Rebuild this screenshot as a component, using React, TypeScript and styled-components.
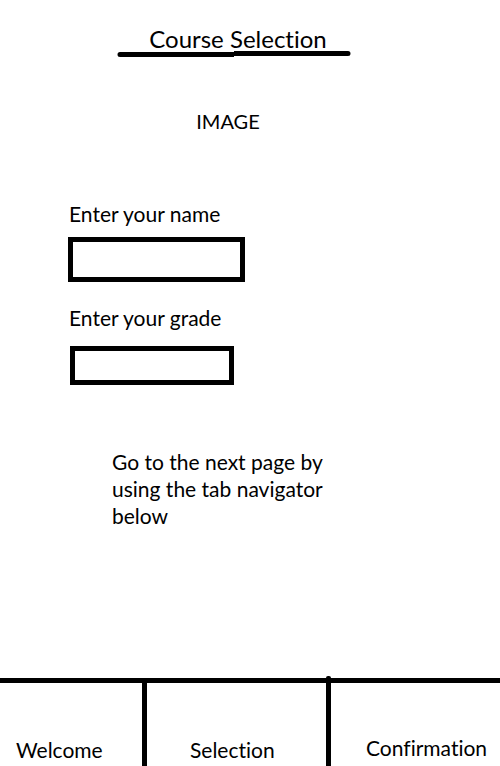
import React from "react";
import styled, { createGlobalStyle } from "styled-components";

const GlobalStyle = createGlobalStyle`
  *, *::before, *::after { box-sizing: border-box; }
  body {
    margin: 0;
    background: #fff;
    color: #000;
    font-family: Lato, "Open Sans", sans-serif;
    font-size: 21px;
    line-height: 27px;
    font-variant-ligatures: none;
  }
`;

const Page = styled.div`
  display: flex;
  flex-direction: column;
  min-height: 100vh;
`;

const Header = styled.header`
  display: flex;
  flex-direction: column;
  align-items: center;
  padding: 23px 24px 0 0;
`;

const Title = styled.h1`
  margin: 0;
  font-size: 24px;
  line-height: 32px;
  font-weight: 400;
`;

const Underline = styled.svg`
  display: block;
  width: 234px;
  height: 8px;
  margin-top: -5px;
  margin-right: 8px;
`;

const Picture = styled.p`
  margin: 50px 44px 0 0;
  font-size: 20px;
  text-align: center;
`;

const Form = styled.form`
  display: flex;
  flex-direction: column;
  align-items: flex-start;
  padding: 65px 68px 0;
`;

const Label = styled.label`
  margin-bottom: 10px;
  padding-left: 1px;
`;

const Field = styled.input<{ $compact?: boolean }>`
  width: ${(p) => (p.$compact ? 164 : 177)}px;
  height: ${(p) => (p.$compact ? 39 : 45)}px;
  margin: ${(p) => (p.$compact ? "5px 0 0 2px" : "0 0 22px")};
  padding: 4px 8px;
  border: 5px solid #000;
  border-radius: 0;
  background: #fff;
  font: inherit;
`;

const Hint = styled.p`
  max-width: 336px;
  margin: 63px 0 40px;
  padding-left: 112px;
`;

const Tabs = styled.nav`
  display: grid;
  grid-template-columns: 147fr 184fr 169fr;
  margin-top: auto;
  border-top: 5px solid #000;
`;

const Tab = styled.a<{ $inset: number; $knob?: boolean }>`
  position: relative;
  display: flex;
  align-items: flex-end;
  height: 83px;
  padding: 0 0 3px ${(p) => p.$inset}px;
  border-right: 5px solid #000;
  color: inherit;
  text-decoration: none;

  &:last-child {
    padding-bottom: 5px;
    border-right: 0;
  }

  &::after {
    content: "";
    display: ${(p) => (p.$knob ? "block" : "none")};
    position: absolute;
    top: -7px;
    right: -5px;
    width: 5px;
    height: 7px;
    border-radius: 2px 2px 0 0;
    background: #000;
  }
`;

export default function App() {
  return (
    <>
      <GlobalStyle />
      <Page>
        <Header>
          <Title>Course Selection</Title>
          <Underline viewBox="0 0 234 8" aria-hidden="true">
            <g fill="none" stroke="#000" strokeWidth="5">
              <path d="M3 4.5H117M117 3.5H231" />
              <path d="M3 4.5h0M231 3.5h0" strokeLinecap="round" />
            </g>
          </Underline>
        </Header>
        <Picture>IMAGE</Picture>
        <Form>
          <Label htmlFor="name">Enter your name</Label>
          <Field id="name" type="text" />
          <Label htmlFor="grade">Enter your grade</Label>
          <Field id="grade" type="text" $compact />
        </Form>
        <Hint>Go to the next page by using the tab navigator below</Hint>
        <Tabs>
          <Tab href="#welcome" $inset={16}>Welcome</Tab>
          <Tab href="#selection" $inset={43} $knob>Selection</Tab>
          <Tab href="#confirmation" $inset={35}>Confirmation</Tab>
        </Tabs>
      </Page>
    </>
  );
}
